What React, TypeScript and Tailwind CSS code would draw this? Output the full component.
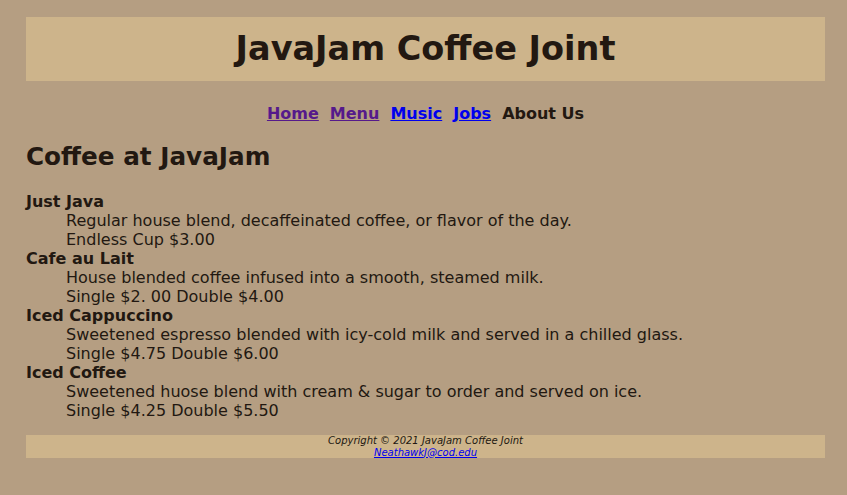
const menu = [
  {
    name: "Just Java",
    desc: "Regular house blend, decaffeinated coffee, or flavor of the day.",
    price: "Endless Cup $3.00",
  },
  {
    name: "Cafe au Lait",
    desc: "House blended coffee infused into a smooth, steamed milk.",
    price: "Single $2. 00 Double $4.00",
  },
  {
    name: "Iced Cappuccino",
    desc: "Sweetened espresso blended with icy-cold milk and served in a chilled glass.",
    price: "Single $4.75 Double $6.00",
  },
  {
    name: "Iced Coffee",
    desc: "Sweetened huose blend with cream & sugar to order and served on ice.",
    price: "Single $4.25 Double $5.50",
  },
]

export default function App() {
  return (
    <div className="min-h-[495px] bg-[#b59e82] text-[#221811] font-['DejaVu_Sans',Verdana,sans-serif] pt-[17px] pl-[26px]">
      <div className="w-[799px]">
        <header className="bg-[#cdb48b] h-[64px] flex items-center justify-center">
          <h1 className="text-[33.5px] font-bold leading-none">JavaJam Coffee Joint</h1>
        </header>

        <nav className="mt-[23px] flex justify-center gap-[11px] text-[16px] font-bold leading-[20px]">
          <a href="#" className="underline text-[#551a8b]">Home</a>
          <a href="#" className="underline text-[#551a8b]">Menu</a>
          <a href="#" className="underline text-[#0000ee]">Music</a>
          <a href="#" className="underline text-[#0000ee]">Jobs</a>
          <span>About Us</span>
        </nav>

        <main>
          <h2 className="mt-[19px] text-[24.7px] font-bold leading-[28px]">Coffee at JavaJam</h2>

          <dl className="mt-[21px] text-[16px] leading-[19px]">
            {menu.map((item) => (
              <div key={item.name}>
                <dt className="font-bold">{item.name}</dt>
                <dd className="pl-[40px]">
                  {item.desc}
                  <br />
                  {item.price}
                </dd>
              </div>
            ))}
          </dl>
        </main>

        <footer className="mt-[15px] bg-[#cdb48b] h-[23px] flex flex-col items-center justify-center text-[10px] italic leading-[12px]">
          <small className="text-[10px]">Copyright © 2021 JavaJam Coffee Joint</small>
          <a href="#" className="underline text-[#0000ee]">NeathawkJ@cod.edu</a>
        </footer>
      </div>
    </div>
  )
}
